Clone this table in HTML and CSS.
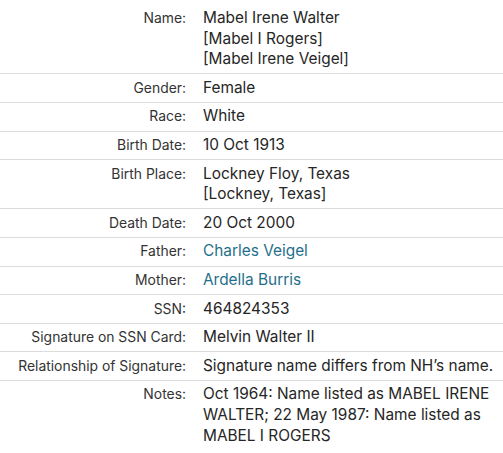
FILE: index.html
```html
<!DOCTYPE html>
<html>
<head>
<meta charset="utf-8">
<link rel="stylesheet" href="styles.css">
</head>
<body>
<div class="record">
  <div class="row"><div class="label">Name:</div><div class="value">Mabel Irene Walter<br>[Mabel I Rogers]<br>[Mabel Irene Veigel]</div></div>
  <div class="row"><div class="label">Gender:</div><div class="value">Female</div></div>
  <div class="row"><div class="label">Race:</div><div class="value">White</div></div>
  <div class="row"><div class="label">Birth Date:</div><div class="value">10 Oct 1913</div></div>
  <div class="row"><div class="label">Birth Place:</div><div class="value">Lockney Floy, Texas<br>[Lockney, Texas]</div></div>
  <div class="row"><div class="label">Death Date:</div><div class="value">20 Oct 2000</div></div>
  <div class="row"><div class="label">Father:</div><div class="value"><a class="link" href="#">Charles Veigel</a></div></div>
  <div class="row"><div class="label">Mother:</div><div class="value"><a class="link" href="#">Ardella Burris</a></div></div>
  <div class="row"><div class="label">SSN:</div><div class="value">464824353</div></div>
  <div class="row"><div class="label">Signature on SSN Card:</div><div class="value">Melvin Walter II</div></div>
  <div class="row"><div class="label">Relationship of Signature:</div><div class="value">Signature name differs from NH’s name.</div></div>
  <div class="row last"><div class="label">Notes:</div><div class="value">Oct 1964: Name listed as MABEL IRENE WALTER; 22 May 1987: Name listed as MABEL I ROGERS</div></div>
</div>
</body>
</html>
```
FILE: styles.css
```css
html, body {
  margin: 0;
  padding: 0;
  background: #ffffff;
}
body {
  font-family: Inter, "Liberation Sans", sans-serif;
  color: #333333;
}
.record {
  padding-top: 4.6px;
}
.row {
  display: grid;
  grid-template-columns: 186px 1fr;
  column-gap: 17px;
  border-bottom: 1px solid #dcdcdc;
  padding: 3.5px 0 3.5px;
}
.row.last {
  border-bottom: none;
}
.label {
  text-align: right;
  font-size: 13.9px;
  line-height: 20.6px;
  color: #333333;
}
.value {
  font-size: 15.4px;
  line-height: 20.6px;
  color: #262626;
}
.link {
  color: #1f6f8b;
  text-decoration: none;
}
```
